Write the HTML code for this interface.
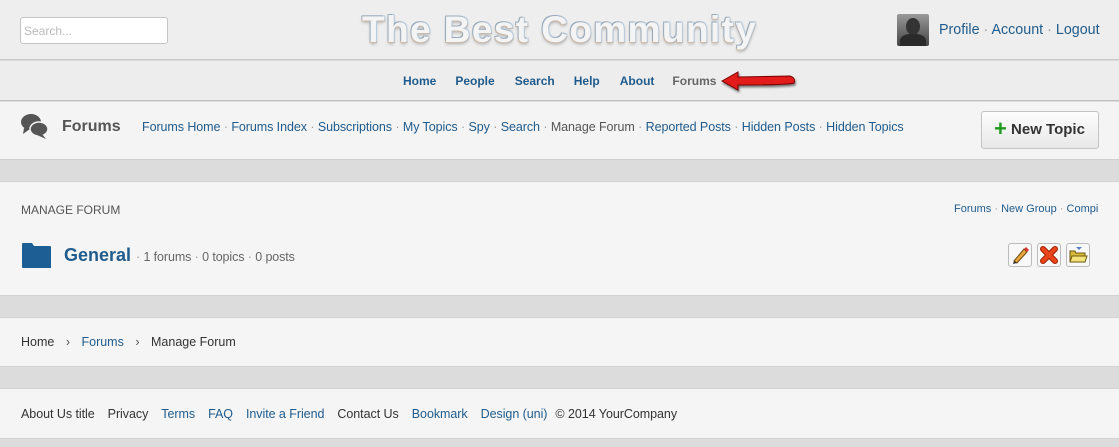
<!DOCTYPE html>
<html><head><meta charset="utf-8"><style>
*{margin:0;padding:0;box-sizing:border-box}
body{width:1119px;height:447px;overflow:hidden;background:#dcdcdc;font-family:"Liberation Sans",sans-serif;font-size:13px;position:relative}
.abs{position:absolute}
a{color:#1f5b8c;text-decoration:none}
.sep{color:#999}
</style></head><body>
<div class="abs" style="left:0;top:0;width:1119px;height:60px;background:#eeeeee;border-bottom:1px solid #c8c8c8"></div>
<div class="abs" style="left:20px;top:17px;width:148px;height:27px;background:#fff;border:1px solid #c4c4c4;border-radius:3px;color:#bbb;font-size:12px;padding:6px 3px">Search...</div>
<div class="abs" style="left:362px;top:9px;font-size:37px;font-weight:bold;color:#f4f4f4;letter-spacing:1.4px;text-shadow:-1px -1px 0 #9ab,1px -1px 0 #bcd,-1px 1px 0 #cba,1px 1px 0 #bbb,0 2px 3px #aaa">The Best Community</div>
<div class="abs" style="left:897px;top:14px;width:32px;height:32px;background:linear-gradient(#999,#444);border-radius:2px;overflow:hidden"><div style="position:absolute;left:9px;top:4px;width:14px;height:17px;border-radius:50%;background:#333"></div><div style="position:absolute;left:3px;top:20px;width:26px;height:16px;border-radius:40% 40% 0 0;background:#2a2a2a"></div></div>
<div class="abs" style="left:939px;top:22px;font-size:14.3px"><a>Profile</a> <span class="sep">·</span> <a>Account</a> <span class="sep">·</span> <a>Logout</a></div>
<div class="abs" style="left:0;top:61px;width:1119px;height:40px;background:#ededed;border-bottom:1px solid #bfbfbf"></div>
<div class="abs" style="left:403px;top:74px;font-size:12px;font-weight:bold;word-spacing:0">
<a style="margin-right:19px">Home</a><a style="margin-right:20px">People</a><a style="margin-right:19px">Search</a><a style="margin-right:20px">Help</a><a style="margin-right:18px">About</a><span style="color:#666">Forums</span></div>
<svg class="abs" style="left:720px;top:68px" width="78" height="26" viewBox="0 0 78 26"><path d="M2 13 L18 4 L18 9 L70 8 Q76 10 74 15 Q70 17 18 17 L18 22 Z" fill="#e21b1b" stroke="#7a0000" stroke-width="1" style="filter:drop-shadow(1px 2px 1px rgba(0,0,0,.5))"/></svg>
<div class="abs" style="left:0;top:102px;width:1119px;height:58px;background:#f4f4f4;border-bottom:1px solid #cfcfcf"></div>
<svg class="abs" style="left:20px;top:113px" width="30" height="27" viewBox="0 0 30 27"><ellipse cx="11" cy="9" rx="10" ry="8" fill="#555"/><path d="M4 15 L3 21 L10 16Z" fill="#555"/><ellipse cx="19" cy="16" rx="9" ry="7" fill="#555" stroke="#f4f4f4" stroke-width="1.5"/><path d="M22 21 L26 26 L17 22Z" fill="#555"/></svg>
<div class="abs" style="left:62px;top:118px;font-size:16px;font-weight:bold;color:#555">Forums</div>
<div class="abs" style="left:142px;top:120px;font-size:12.5px;letter-spacing:-0.07px"><a>Forums Home</a> <span class="sep">·</span> <a>Forums Index</a> <span class="sep">·</span> <a>Subscriptions</a> <span class="sep">·</span> <a>My Topics</a> <span class="sep">·</span> <a>Spy</a> <span class="sep">·</span> <a>Search</a> <span class="sep">·</span> <span style="color:#555">Manage Forum</span> <span class="sep">·</span> <a>Reported Posts</a> <span class="sep">·</span> <a>Hidden Posts</a> <span class="sep">·</span> <a>Hidden Topics</a></div>
<div class="abs" style="left:981px;top:111px;width:118px;height:38px;border:1px solid #c4c4c4;border-radius:3px;background:linear-gradient(#fdfdfd,#e8e8e8);font-size:15px;font-weight:bold;color:#333;padding:9px 0 0 12px"><span style="color:#1e9a1e;font-size:22px;line-height:10px;vertical-align:-2px">+</span> New Topic</div>
<div class="abs" style="left:0;top:181px;width:1119px;height:115px;background:#f5f5f5;border-top:1px solid #d2d2d2;border-bottom:1px solid #d2d2d2"></div>
<div class="abs" style="left:21px;top:203px;font-size:12px;color:#555">MANAGE FORUM</div>
<div class="abs" style="left:954px;top:203px;font-size:11px;width:145px;overflow:hidden;white-space:nowrap"><a>Forums</a> <span class="sep">·</span> <a>New Group</a> <span class="sep">·</span> <a>Compile</a></div>
<svg class="abs" style="left:22px;top:243px" width="29" height="25" viewBox="0 0 29 25"><path d="M0 1 Q0 0 1 0 L10 0 L12 3 L28 3 Q29 3 29 4 L29 25 L1 25 Q0 25 0 24Z" fill="#1d5f94"/></svg>
<div class="abs" style="left:64px;top:245px;font-size:18px;font-weight:bold;color:#1f5b8c">General</div>
<div class="abs" style="left:136px;top:250px;font-size:12.5px;color:#666;letter-spacing:-0.1px"><span class="sep">·</span> 1 forums <span class="sep">·</span> 0 topics <span class="sep">·</span> 0 posts</div>
<div class="abs" style="left:1008px;top:243px;width:24px;height:24px;border:1px solid #bbb;border-radius:3px;background:#f8f8f8"><svg width="22" height="22" viewBox="0 0 22 22"><path d="M5 17 L15 5 L18 8 L8 19 Z" fill="#e8a33a" stroke="#6b4a10"/><path d="M5 17 L4 20 L8 19Z" fill="#333"/><path d="M15 5 L17 3 L20 6 L18 8Z" fill="#d33"/></svg></div>
<div class="abs" style="left:1037px;top:243px;width:24px;height:24px;border:1px solid #bbb;border-radius:3px;background:#f8f8f8"><svg width="22" height="22" viewBox="0 0 22 22"><path d="M5 5 L17 17 M17 5 L5 17" stroke="#a01c00" stroke-width="6" stroke-linecap="round"/><path d="M5 5 L17 17 M17 5 L5 17" stroke="#e8451a" stroke-width="4" stroke-linecap="round"/></svg></div>
<div class="abs" style="left:1066px;top:243px;width:24px;height:24px;border:1px solid #bbb;border-radius:3px;background:#f8f8f8"><svg width="22" height="22" viewBox="0 0 22 22"><path d="M9 3 L15 3 L12 6Z" fill="#5a7fc4"/><path d="M3 7 L8 7 L9 9 L18 9 L18 18 L3 18Z" fill="#d9b93a" stroke="#6b5a10"/><path d="M5 12 L20 12 L18 18 L3 18Z" fill="#f4e27a" stroke="#6b5a10"/></svg></div>
<div class="abs" style="left:0;top:317px;width:1119px;height:50px;background:#f5f5f5;border-top:1px solid #d2d2d2;border-bottom:1px solid #d2d2d2"></div>
<div class="abs" style="left:21px;top:335px;font-size:12.5px;color:#333"><span>Home</span> <span style="margin:0 8px;color:#555">›</span> <a>Forums</a> <span style="margin:0 8px;color:#555">›</span> <span>Manage Forum</span></div>
<div class="abs" style="left:0;top:388px;width:1119px;height:51px;background:#f5f5f5;border-top:1px solid #d2d2d2;border-bottom:1px solid #d2d2d2"></div>
<div class="abs" style="left:21px;top:407px;font-size:12.5px;color:#333;letter-spacing:-0.05px"><span style="margin-right:13px">About Us title</span><span style="margin-right:13px">Privacy</span><a style="margin-right:13px">Terms</a><a style="margin-right:13px">FAQ</a><a style="margin-right:13px">Invite a Friend</a><span style="margin-right:13px">Contact Us</span><a style="margin-right:13px">Bookmark</a><a style="margin-right:8px">Design (uni)</a><span>© 2014 YourCompany</span></div>
</body></html>
